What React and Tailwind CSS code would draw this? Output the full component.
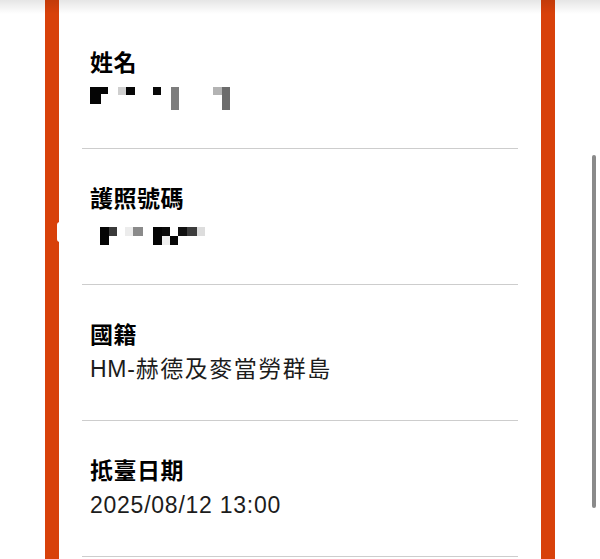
import React from 'react'

// Pixelated placeholders standing in for the redacted values
const NAME_BLOCKS = [
  { x: 0, y: 0, w: 18, h: 7, c: '#050505' },
  { x: 0, y: 0, w: 11, h: 17, c: '#050505' },
  { x: 28, y: 0, w: 8, h: 8, c: '#cfcfcf' },
  { x: 36, y: 0, w: 9, h: 8, c: '#060606' },
  { x: 63, y: 0, w: 8, h: 8, c: '#080808' },
  { x: 81, y: 0, w: 8, h: 23, c: '#7d7d7d' },
  { x: 123, y: 0, w: 9, h: 8, c: '#b3b3b3' },
  { x: 132, y: 0, w: 8, h: 23, c: '#6c6c6c' },
]

const PASSPORT_BLOCKS = [
  { x: 0, y: 0, w: 9, h: 18, c: '#050505' },
  { x: 9, y: 0, w: 8, h: 9, c: '#3a3a3a' },
  { x: 25, y: 0, w: 8, h: 9, c: '#ececec' },
  { x: 33, y: 0, w: 10, h: 9, c: '#8a8a8a' },
  { x: 53, y: 0, w: 9, h: 18, c: '#040404' },
  { x: 62, y: 0, w: 8, h: 9, c: '#0a0a0a' },
  { x: 62, y: 9, w: 8, h: 9, c: '#eeeeee' },
  { x: 70, y: 9, w: 8, h: 9, c: '#070707' },
  { x: 78, y: 0, w: 9, h: 9, c: '#111111' },
  { x: 87, y: 0, w: 10, h: 9, c: '#3c3c3c' },
  { x: 97, y: 0, w: 8, h: 9, c: '#dddddd' },
]

function Mosaic({ blocks, width, height }) {
  return (
    <svg width={width} height={height} viewBox={`0 0 ${width} ${height}`} className="block">
      {blocks.map((b, i) => (
        <rect key={i} x={b.x} y={b.y} width={b.w} height={b.h} fill={b.c} />
      ))}
    </svg>
  )
}

function Field({ label, children }) {
  return (
    <div className="border-b border-[#cdcdcd] pt-[32px] pb-[34px] pl-2">
      <div
        className="text-[23px] leading-[32px] font-bold tracking-[0.5px] text-black"
        style={{ fontFamily: '"Noto Sans CJK TC", sans-serif' }}
      >
        {label}
      </div>
      <div className="mt-[3px] h-[34px] flex items-center">{children}</div>
    </div>
  )
}

function Value({ children }) {
  return (
    <span
      className="text-[23px] leading-[34px] tracking-[0.75px] text-[#1c1c1c]"
      style={{ fontFamily: '"Liberation Sans", "Noto Sans CJK TC", sans-serif' }}
    >
      {children}
    </span>
  )
}

export default function App() {
  return (
    <div className="relative w-[600px] h-[559px] overflow-hidden bg-white">
      <div className="mx-[45px] h-full border-x-[14px] border-[#d8410a] pt-[13px]">
        <div className="mx-[23px]">
          <Field label="姓名">
            <div className="pt-[2px]">
              <Mosaic blocks={NAME_BLOCKS} width={141} height={23} />
            </div>
          </Field>
          <Field label="護照號碼">
            <div className="pl-[10px] pt-[6px]">
              <Mosaic blocks={PASSPORT_BLOCKS} width={105} height={18} />
            </div>
          </Field>
          <Field label="國籍">
            <Value>
              HM-<span className="tracking-[1.5px]">赫德及麥當勞群島</span>
            </Value>
          </Field>
          <Field label="抵臺日期">
            <Value>2025/08/12 13:00</Value>
          </Field>
        </div>
      </div>

      {/* header shadow */}
      <div className="absolute left-0 right-0 top-0 h-[14px] bg-gradient-to-b from-black/10 to-transparent" />

      {/* small tab on the left edge */}
      <div className="absolute left-[57px] top-[222px] w-[3px] h-[20px] rounded-l-[3px] bg-white" />

      {/* scrollbar thumb */}
      <div className="absolute left-[592px] top-[155px] w-[4px] h-[353px] rounded-full bg-[#8a8a8a]" />
    </div>
  )
}
